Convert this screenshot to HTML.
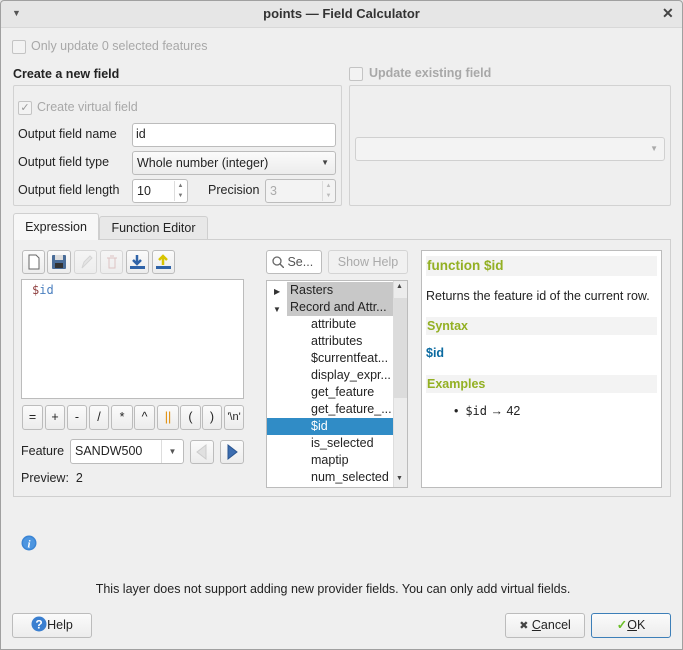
<!DOCTYPE html>
<html><head><meta charset="utf-8"><style>
*{box-sizing:border-box;margin:0;padding:0}
body{width:683px;height:650px;overflow:hidden;background:#efefef;font-family:"Liberation Sans",sans-serif;font-size:12.5px;color:#232323;position:relative}
.a{position:absolute;white-space:nowrap}
.btn{position:absolute;border:1px solid #bcbcbc;border-radius:3px;background:linear-gradient(#fbfbfb,#ececec);text-align:center;white-space:nowrap}
.inp{position:absolute;border:1px solid #bcbcbc;border-radius:3px;background:#fff;white-space:nowrap}
.cb{position:absolute;width:14px;height:14px;border:1px solid #c4c4c4;border-radius:2px;background:#f3f3f3}
.dis{color:#a8a8a8}
.row{position:absolute;left:0;height:17px;line-height:17px;padding-left:44px;width:126px}
.hh{position:absolute;left:4px;width:231px;height:18px;background:#f3f3f3;color:#93b023;font-weight:bold;line-height:18px;padding-left:1px}
</style></head><body>
<div class="a" style="left:0;top:0;width:683px;height:28px;background:#e6e6e6;border-bottom:1px solid #d8d8d8"></div>
<div class="a" style="left:12px;top:8px;font-size:9px;color:#555">▼</div>
<div class="a" style="left:0;top:6px;width:683px;text-align:center;font-weight:bold;font-size:13px;color:#333">points — Field Calculator</div>
<div class="a" style="left:662px;top:5px;font-size:14px;font-weight:bold;color:#444">✕</div>
<div class="a" style="left:0;top:0;width:683px;height:650px;border:1px solid #a0a0a0;border-radius:4px 4px 0 0;pointer-events:none"></div>

<div class="cb" style="left:12px;top:40px"></div>
<div class="a dis" style="left:31px;top:39px">Only update 0 selected features</div>
<div class="a" style="left:13px;top:67px;font-weight:bold">Create a new field</div>
<div class="a" style="left:13px;top:85px;width:329px;height:121px;border:1px solid #d2d2d2;border-radius:2px"></div>
<div class="cb" style="left:18px;top:101px;color:#999;font-size:11px;line-height:12px;text-align:center">✓</div>
<div class="a dis" style="left:37px;top:100px">Create virtual field</div>
<div class="a" style="left:18px;top:127px">Output field name</div>
<div class="inp" style="left:132px;top:123px;width:204px;height:24px;padding:3px 3px">id</div>
<div class="a" style="left:18px;top:155px">Output field type</div>
<div class="btn" style="left:132px;top:151px;width:204px;height:24px;text-align:left;padding:4px 4px">Whole number (integer)<span class="a" style="right:6px;top:6px;font-size:8px;color:#444">▼</span></div>
<div class="a" style="left:18px;top:183px">Output field length</div>
<div class="inp" style="left:132px;top:179px;width:56px;height:24px;padding:4px 4px">10<span class="a" style="right:1px;top:1px;width:12px;height:20px;border-left:1px solid #ddd;font-size:6px;color:#777;line-height:10px;text-align:center">▲<br>▼</span></div>
<div class="a" style="left:208px;top:183px">Precision</div>
<div class="inp" style="left:265px;top:179px;width:71px;height:24px;padding:4px 4px;background:#f3f3f3;color:#aaa">3<span class="a" style="right:1px;top:1px;width:12px;height:20px;border-left:1px solid #ddd;font-size:6px;color:#bbb;line-height:10px;text-align:center">▲<br>▼</span></div>

<div class="cb" style="left:349px;top:67px"></div>
<div class="a dis" style="left:369px;top:66px;font-weight:bold">Update existing field</div>
<div class="a" style="left:349px;top:85px;width:322px;height:121px;border:1px solid #d2d2d2;border-radius:2px"></div>
<div class="btn" style="left:355px;top:137px;width:310px;height:24px;background:#f3f3f3;border-color:#d0d0d0"><span class="a" style="right:6px;top:6px;font-size:8px;color:#aaa">▼</span></div>

<div class="a" style="left:13px;top:239px;width:658px;height:258px;border:1px solid #cfcfcf;background:#efefef"></div>
<div class="a" style="left:13px;top:213px;width:86px;height:27px;border:1px solid #cfcfcf;border-bottom:none;border-radius:3px 3px 0 0;background:#f7f7f7;text-align:center;line-height:26px">Expression</div>
<div class="a" style="left:99px;top:216px;width:109px;height:23px;border:1px solid #cfcfcf;border-bottom:none;border-radius:3px 3px 0 0;background:#e8e8e8;text-align:center;line-height:22px">Function Editor</div>

<div class="btn" style="left:22px;top:250px;width:23px;height:24px"><svg width="21" height="22"><path d="M6 4h7l3 3v11H6z" fill="#fff" stroke="#666"/></svg></div>
<div class="btn" style="left:47px;top:250px;width:24px;height:24px"><svg width="22" height="22"><rect x="4" y="4" width="14" height="14" rx="1" fill="#4a6d99"/><rect x="7" y="4" width="8" height="5" fill="#ddd"/><rect x="7" y="12" width="8" height="5" fill="#333"/></svg></div>
<div class="btn" style="left:74px;top:250px;width:23px;height:24px;opacity:.5"><svg width="21" height="22"><path d="M7 17l2-6 6-6 2 2-6 6z" fill="#ddd" stroke="#bbb"/></svg></div>
<div class="btn" style="left:100px;top:250px;width:23px;height:24px;opacity:.5"><svg width="21" height="22"><path d="M6 7h10M8 7v10h6V7M9 5h4" fill="none" stroke="#c99"/></svg></div>
<div class="btn" style="left:126px;top:250px;width:23px;height:24px"><svg width="21" height="22"><path d="M10 4v9M6 9l4 4 4-4" stroke="#2f63a8" stroke-width="2.5" fill="none"/><rect x="3" y="15" width="15" height="3" fill="#2f63a8"/></svg></div>
<div class="btn" style="left:152px;top:250px;width:23px;height:24px"><svg width="21" height="22"><path d="M10 14V5M6 9l4-4 4 4" stroke="#d8c400" stroke-width="2.5" fill="none"/><rect x="3" y="15" width="15" height="3" fill="#2f63a8"/></svg></div>

<div class="inp" style="left:21px;top:279px;width:223px;height:120px;border-radius:0;padding:3px 10px;font-family:'DejaVu Sans Mono',monospace;font-size:12px"><span style="color:#8f3f3f">$</span><span style="color:#4a7fbf">id</span></div>

<div class="btn" style="left:22px;top:405px;width:21px;height:25px;line-height:23px">=</div>
<div class="btn" style="left:45px;top:405px;width:20px;height:25px;line-height:23px">+</div>
<div class="btn" style="left:67px;top:405px;width:20px;height:25px;line-height:23px">-</div>
<div class="btn" style="left:89px;top:405px;width:20px;height:25px;line-height:23px">/</div>
<div class="btn" style="left:111px;top:405px;width:22px;height:25px;line-height:23px">*</div>
<div class="btn" style="left:134px;top:405px;width:21px;height:25px;line-height:23px">^</div>
<div class="btn" style="left:157px;top:405px;width:22px;height:25px;line-height:23px;color:#e08a00">||</div>
<div class="btn" style="left:180px;top:405px;width:21px;height:25px;line-height:23px">(</div>
<div class="btn" style="left:202px;top:405px;width:20px;height:25px;line-height:23px">)</div>
<div class="btn" style="left:224px;top:405px;width:20px;height:25px;line-height:23px;font-size:11px">'\n'</div>

<div class="a" style="left:21px;top:444px">Feature</div>
<div class="inp" style="left:70px;top:439px;width:114px;height:25px;padding:4px 4px">SANDW500<span class="a" style="right:0;top:0;width:22px;height:23px;border-left:1px solid #ddd;font-size:8px;color:#555;text-align:center;line-height:23px">▼</span></div>
<div class="btn" style="left:190px;top:440px;width:24px;height:24px"><svg width="22" height="22"><path d="M15 4v14L6 11z" fill="#e0e0e0" stroke="#ccc"/></svg></div>
<div class="btn" style="left:220px;top:440px;width:24px;height:24px"><svg width="22" height="22"><path d="M7 4v14l9-7z" fill="#3c6db0" stroke="#2a5590"/></svg></div>
<div class="a" style="left:21px;top:471px">Preview:&nbsp; 2</div>

<div class="inp" style="left:266px;top:250px;width:56px;height:24px;padding:4px 5px;color:#555;overflow:hidden"><svg width="12" height="12" style="vertical-align:-2px"><circle cx="5" cy="5" r="4" fill="none" stroke="#666" stroke-width="1.3"/><path d="M8 8l4 4" stroke="#666" stroke-width="1.4"/></svg>&nbsp;Se...</div>
<div class="btn" style="left:328px;top:250px;width:80px;height:24px;line-height:22px;color:#aaa;background:#f1f1f1;border-color:#d4d4d4">Show Help</div>

<div class="inp" style="left:266px;top:280px;width:142px;height:208px;border-radius:0;overflow:hidden">
<div class="row" style="top:1px;left:20px;width:106px;padding-left:3px;background:#c8c8c8">Rasters</div>
<div class="a" style="left:7px;top:2px;font-size:8px;color:#333;line-height:17px">▶</div>
<div class="row" style="top:18px;left:20px;width:106px;padding-left:3px;background:#c8c8c8">Record and Attr...</div>
<div class="a" style="left:6px;top:20px;font-size:8px;color:#333;line-height:17px">▼</div>
<div class="row" style="top:35px">attribute</div>
<div class="row" style="top:52px">attributes</div>
<div class="row" style="top:69px">$currentfeat...</div>
<div class="row" style="top:86px">display_expr...</div>
<div class="row" style="top:103px">get_feature</div>
<div class="row" style="top:120px">get_feature_...</div>
<div class="row" style="top:137px;background:#308cc6;color:#fff">$id</div>
<div class="row" style="top:154px">is_selected</div>
<div class="row" style="top:171px">maptip</div>
<div class="row" style="top:188px">num_selected</div>
<div class="a" style="left:126px;top:0;width:15px;height:206px;background:#ececec;border-left:1px solid #ddd"></div>
<div class="a" style="left:127px;top:17px;width:13px;height:100px;background:#dcdcdc"></div>
<div class="a" style="left:129px;top:2px;font-size:7px;color:#444">▲</div>
<div class="a" style="left:129px;top:194px;font-size:7px;color:#444">▼</div>
</div>

<div class="inp" style="left:421px;top:250px;width:241px;height:238px;border-radius:0">
<div class="hh" style="top:5px;font-size:13.5px;height:20px;line-height:20px">function $id</div>
<div class="a" style="left:4px;top:38px">Returns the feature id of the current row.</div>
<div class="hh" style="top:66px">Syntax</div>
<div class="a" style="left:4px;top:95px;color:#0b6aa0;font-weight:bold">$id</div>
<div class="hh" style="top:124px">Examples</div>
<div class="a" style="left:32px;top:153px">•&nbsp; <span style="font-family:'DejaVu Sans Mono',monospace;font-size:12px">$id</span> → 42</div>
</div>

<svg class="a" style="left:21px;top:535px" width="16" height="16"><circle cx="8" cy="8" r="7.5" fill="#3a84d4"/><circle cx="8" cy="8" r="6" fill="#4c95e0"/><text x="8" y="12.5" font-size="11" font-style="italic" font-weight="bold" fill="#fff" text-anchor="middle" font-family="Liberation Serif">i</text></svg>
<div class="a" style="left:0;top:582px;width:666px;text-align:center">This layer does not support adding new provider fields. You can only add virtual fields.</div>

<div class="btn" style="left:12px;top:613px;width:80px;height:25px;line-height:23px"><svg width="16" height="16" style="vertical-align:-3px"><circle cx="8" cy="8" r="7.5" fill="#3a7fd0"/><text x="8" y="12.5" font-size="12" font-weight="bold" fill="#fff" text-anchor="middle">?</text></svg>Help</div>
<div class="btn" style="left:505px;top:613px;width:80px;height:25px;line-height:23px"><span style="font-size:11px;color:#444">✖</span> <u>C</u>ancel</div>
<div class="btn" style="left:591px;top:613px;width:80px;height:25px;line-height:23px;border-color:#3d7fb8"><span style="color:#6cbf2a;font-weight:bold">✓</span><u>O</u>K</div>
</body></html>
